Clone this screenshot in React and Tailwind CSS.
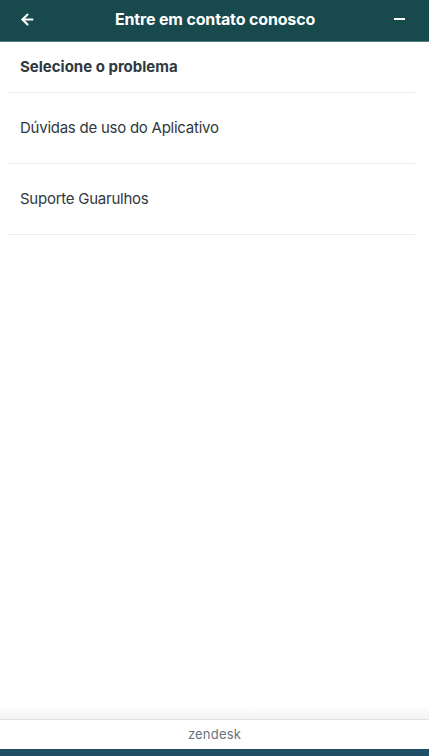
import { FiArrowLeft } from 'react-icons/fi';

const ITEMS = ['Dúvidas de uso do Aplicativo', 'Suporte Guarulhos'];

export default function App() {
  return (
    <div
      className="h-[756px] w-full flex flex-col bg-white"
      style={{ fontFamily: 'Inter, "Noto Sans", sans-serif' }}
    >
      {/* Header */}
      <header className="h-[42px] shrink-0 bg-[#17494d] border-b border-[#4f8083] flex items-center px-[19px] pb-[3px] text-white">
        <FiArrowLeft size={17} strokeWidth={3} />
        <h1 className="flex-1 text-center text-[16px] font-bold tracking-[-0.15px]">
          Entre em contato conosco
        </h1>
        <div className="w-[11px] h-[2px] bg-white mr-[5px]" />
      </header>

      {/* Content */}
      <main className="flex-1 pl-2 pr-[14px]">
        <div className="h-[51px] flex items-center px-3 border-b border-[#e9ebed] text-[15px] font-bold text-[#2f3941]">
          Selecione o problema
        </div>
        {ITEMS.map((item) => (
          <div
            key={item}
            className="h-[71px] flex items-center px-3 border-b border-[#e9ebed] text-[15px] tracking-[-0.25px] text-[#2f3941]"
          >
            {item}
          </div>
        ))}
      </main>

      {/* Footer */}
      <footer className="shrink-0 relative">
        <div className="absolute -top-[14px] left-0 right-0 h-[14px] bg-gradient-to-b from-transparent to-[#f3f3f3]" />
        <div className="h-[30px] flex items-center justify-center border-t border-[#e4e4e4] text-[13px] tracking-[0.2px] text-[#68737d]">
          zendesk
        </div>
        <div className="h-[7px] bg-[#1f4e66]" />
      </footer>
    </div>
  );
}
